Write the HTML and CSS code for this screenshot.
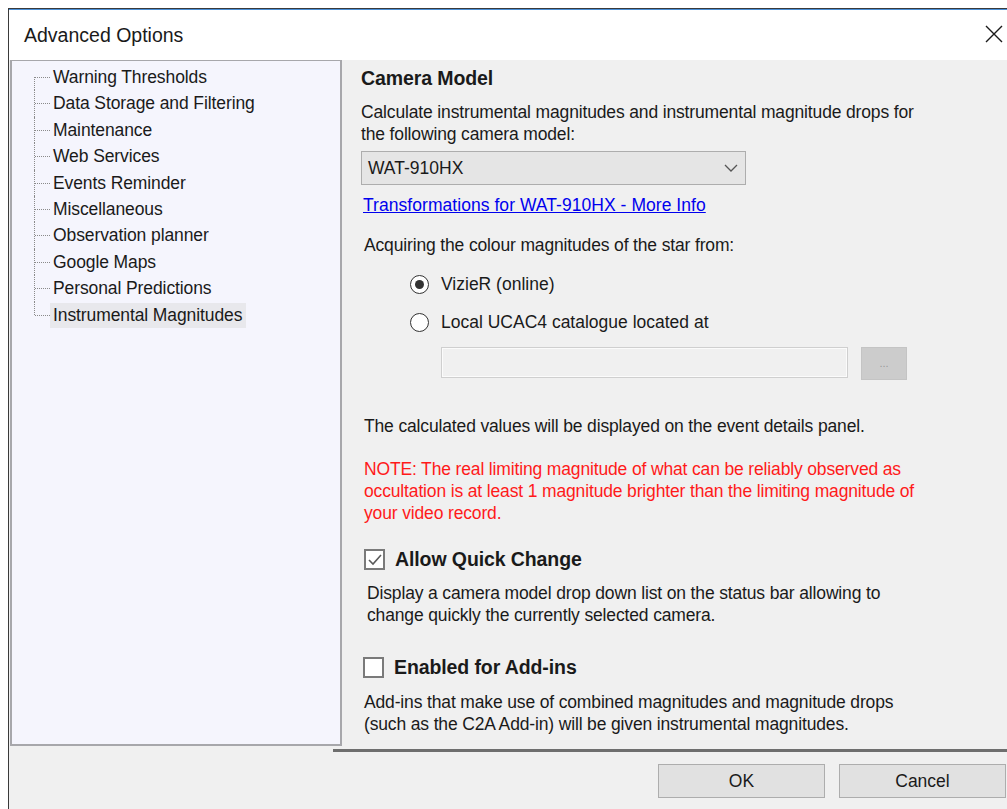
FILE: index.html
```html
<!DOCTYPE html>
<html lang="en">
<head>
<meta charset="utf-8">
<title>Advanced Options</title>
<link rel="stylesheet" href="styles.css">
</head>
<body>
<div class="window">
  <div class="titlebar">
    <span class="title">Advanced Options</span>
    <svg class="close" width="18" height="18" viewBox="0 0 18 18"><path d="M1 1 L17 17 M17 1 L1 17" stroke="#1a1a1a" stroke-width="1.4" fill="none"/></svg>
  </div>
  <div class="client">
    <div class="main">
      <ul class="tree">
        <li class="node">Warning Thresholds</li>
        <li class="node">Data Storage and Filtering</li>
        <li class="node">Maintenance</li>
        <li class="node">Web Services</li>
        <li class="node">Events Reminder</li>
        <li class="node">Miscellaneous</li>
        <li class="node">Observation planner</li>
        <li class="node">Google Maps</li>
        <li class="node">Personal Predictions</li>
        <li class="node last"><span class="selected">Instrumental Magnitudes</span></li>
      </ul>
      <div class="options">
        <h2 class="heading">Camera Model</h2>
        <p class="text intro">Calculate instrumental magnitudes and instrumental magnitude drops for<br>the following camera model:</p>
        <div class="combo">
          <span>WAT-910HX</span>
          <svg width="14" height="8" viewBox="0 0 14 8"><path d="M1 1 L7 7 L13 1" stroke="#555" stroke-width="1.3" fill="none"/></svg>
        </div>
        <a class="link" href="#">Transformations for WAT-910HX - More Info</a>
        <p class="text acquire">Acquiring the colour magnitudes of the star from:</p>
        <div class="radios">
          <label class="radio"><span class="dot on"></span>VizieR (online)</label>
          <label class="radio"><span class="dot"></span>Local UCAC4 catalogue located at</label>
          <div class="pathrow">
            <div class="pathbox"></div>
            <div class="browse">...</div>
          </div>
        </div>
        <p class="text calc">The calculated values will be displayed on the event details panel.</p>
        <p class="text note">NOTE: The real limiting magnitude of what can be reliably observed as<br>occultation is at least 1 magnitude brighter than the limiting magnitude of<br>your video record.</p>
        <label class="check first">
          <span class="box"><svg width="16" height="14" viewBox="0 0 16 14"><path d="M2 7 L6 11 L14 2" stroke="#5a5a5a" stroke-width="1.6" fill="none"/></svg></span>
          <span class="checklabel">Allow Quick Change</span>
        </label>
        <p class="text desc">Display a camera model drop down list on the status bar allowing to<br>change quickly the currently selected camera.</p>
        <label class="check second">
          <span class="box"></span>
          <span class="checklabel">Enabled for Add-ins</span>
        </label>
        <p class="text desc2">Add-ins that make use of combined magnitudes and magnitude drops<br>(such as the C2A Add-in) will be given instrumental magnitudes.</p>
      </div>
    </div>
    <div class="footer">
      <div class="separator"></div>
      <div class="buttons">
        <button class="btn">OK</button>
        <button class="btn">Cancel</button>
      </div>
    </div>
  </div>
</div>
</body>
</html>
```
FILE: styles.css
```css
* { box-sizing: border-box; }

html, body {
  margin: 0;
  padding: 0;
  background: #ffffff;
  overflow: hidden;
}

body {
  font-family: "Liberation Sans", Arial, sans-serif;
  font-size: 17.5px;
  color: #1a1a1a;
}

.window {
  margin: 8px 0 0 8px;
  width: 1010px;
  height: 801px;
  border-top: 1px solid #3a3a3a;
  border-left: 1px solid #3a3a3a;
  background: #f0f0f0;
}

.titlebar {
  height: 51px;
  background: #ffffff;
  border-top: 1px solid #4a8fd6;
  display: flex;
  align-items: center;
  justify-content: space-between;
  padding: 0 17px 0 15px;
}

.title {
  font-size: 19.5px;
  color: #1a1a1a;
}

.close { margin-top: -2px; margin-right: -2px; }

.client {
  display: flex;
  flex-direction: column;
  height: 749px;
}

.main {
  display: flex;
  height: 686px;
}

.tree {
  list-style: none;
  margin: 0 0 0 1px;
  padding: 3px 0 0 0;
  width: 332px;
  height: 686px;
  background: #f5f5fd;
  border: 2px solid #a7a7ab;
  border-top-width: 1px;
}

.node {
  position: relative;
  height: 26.4px;
  line-height: 26px;
  padding-left: 41px;
  letter-spacing: -0.1px;
}

/* dotted tree connectors */
.node::before {
  content: "";
  position: absolute;
  left: 22px;
  top: 0;
  height: 100%;
  border-left: 1px dotted #8a8a8a;
}
.node:first-child::before { top: 13px; height: calc(100% - 13px); }
.node.last::before { height: 13px; }
.node::after {
  content: "";
  position: absolute;
  left: 23px;
  top: 13px;
  width: 15px;
  border-top: 1px dotted #8a8a8a;
}

.selected {
  background: #e8e8ec;
  margin-left: -3px;
  padding: 2px 4px 3px 3px;
}

.options {
  flex: 1;
  padding: 7px 0 0 19px;
}

.heading {
  margin: 0;
  font-size: 19.5px;
  font-weight: bold;
  line-height: 22px;
  letter-spacing: -0.1px;
}

.text {
  margin: 0;
  line-height: 21.5px;
  letter-spacing: -0.15px;
}

.intro { margin-top: 13px; }

.combo {
  margin-top: 6px;
  width: 385px;
  height: 34px;
  background: #e5e5e5;
  border: 1px solid #adadad;
  display: flex;
  align-items: center;
  justify-content: space-between;
  padding: 0 7px 0 6px;
}

.link {
  display: inline-block;
  margin: 9px 0 0 2px;
  color: #0000ee;
  line-height: 22px;
  letter-spacing: 0.05px;
}

.acquire { margin: 19px 0 0 3px; }

.radios { padding-left: 49px; margin-top: 15px; }

.radio {
  display: flex;
  align-items: center;
  height: 26px;
  margin-bottom: 12px;
  gap: 12px;
}

.dot {
  width: 19px;
  height: 19px;
  border-radius: 50%;
  border: 1px solid #333;
  background: #ffffff;
  display: flex;
  align-items: center;
  justify-content: center;
}
.dot.on::after {
  content: "";
  width: 9px;
  height: 9px;
  border-radius: 50%;
  background: #333;
}

.pathrow {
  display: flex;
  gap: 13px;
  margin: -1px 0 0 31px;
}

.pathbox {
  width: 407px;
  height: 31px;
  background: #f0f0f0;
  border: 1px solid #cfcfcf;
  box-shadow: inset 0 0 0 1px #fbfbfb;
}

.browse {
  width: 46px;
  height: 33px;
  background: #cccccc;
  border: 1px solid #c4c4c4;
  color: #9a9a9a;
  font-size: 11px;
  text-align: center;
  line-height: 30px;
}

.calc { margin: 36px 0 0 3px; }

.note {
  margin: 21px 0 0 3px;
  color: #ff1a1a;
  line-height: 22px;
}

.check {
  display: flex;
  align-items: center;
  gap: 10px;
}
.check.first { margin: 24px 0 0 3px; }
.check.second { margin: 30px 0 0 2px; }

.box {
  width: 21px;
  height: 21px;
  border: 2px solid #7a7a7a;
  background: #ffffff;
  display: flex;
  align-items: center;
  justify-content: center;
}

.checklabel {
  font-weight: bold;
  font-size: 19.5px;
  letter-spacing: -0.1px;
}

.desc { margin: 12px 0 0 6px; }
.desc2 { margin: 13px 0 0 3px; }

.footer {
  height: 63px;
}

.separator {
  margin: 3px 0 0 324px;
  height: 3px;
  background: #6e6e6e;
}

.buttons {
  display: flex;
  justify-content: flex-end;
  gap: 14px;
  margin-top: 12px;
  margin-right: 12px;
}

.btn {
  width: 167px;
  height: 34px;
  font-family: "Liberation Sans", Arial, sans-serif;
  font-size: 17.5px;
  color: #1a1a1a;
  background: #e1e1e1;
  border: 1px solid #adadad;
  padding: 0;
}
```
